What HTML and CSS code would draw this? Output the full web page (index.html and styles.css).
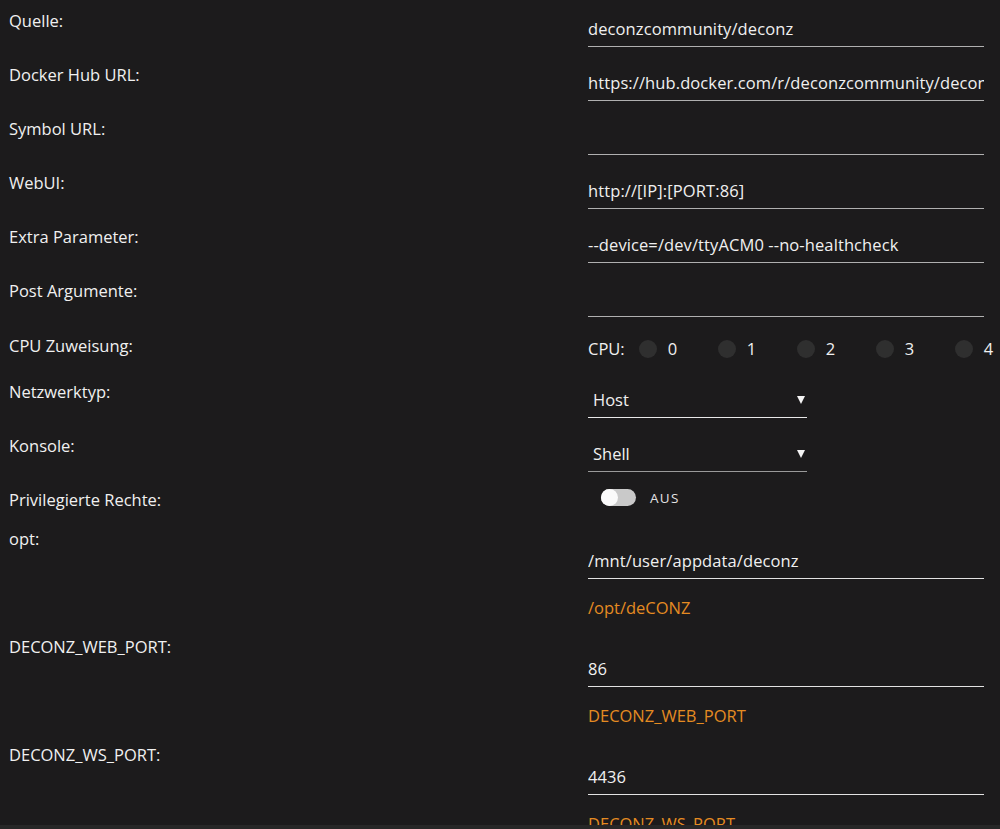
FILE: index.html
```
<!DOCTYPE html>
<html lang="de">
<head>
    <meta charset="UTF-8">
    <meta name="viewport" content="width=device-width, initial-scale=1.0">
    <title>deCONZ bearbeiten</title>
    <link rel="stylesheet" href="styles.css">
</head>
<body>
    <form class="template-form">
        <div class="row">
            <label class="row-label">Quelle:</label>
            <div class="row-value">
                <input type="text" class="line-input" value="deconzcommunity/deconz">
            </div>
        </div>
        <div class="row">
            <label class="row-label">Docker Hub URL:</label>
            <div class="row-value">
                <input type="text" class="line-input" value="https://hub.docker.com/r/deconzcommunity/deconz/">
            </div>
        </div>
        <div class="row">
            <label class="row-label">Symbol URL:</label>
            <div class="row-value">
                <input type="text" class="line-input" value="">
            </div>
        </div>
        <div class="row">
            <label class="row-label">WebUI:</label>
            <div class="row-value">
                <input type="text" class="line-input" value="http://[IP]:[PORT:86]">
            </div>
        </div>
        <div class="row">
            <label class="row-label">Extra Parameter:</label>
            <div class="row-value">
                <input type="text" class="line-input" value="--device=/dev/ttyACM0 --no-healthcheck">
            </div>
        </div>
        <div class="row">
            <label class="row-label">Post Argumente:</label>
            <div class="row-value">
                <input type="text" class="line-input" value="">
            </div>
        </div>

        <!-- CPU Zuweisung -->
        <div class="row row-cpu">
            <label class="row-label">CPU Zuweisung:</label>
            <div class="row-value cpu-list">
                <span class="cpu-title">CPU:</span>
                <label class="cpu-item"><span class="cpu-dot"></span>0</label>
                <label class="cpu-item"><span class="cpu-dot"></span>1</label>
                <label class="cpu-item"><span class="cpu-dot"></span>2</label>
                <label class="cpu-item"><span class="cpu-dot"></span>3</label>
                <label class="cpu-item"><span class="cpu-dot"></span>4</label>
            </div>
        </div>

        <div class="row">
            <label class="row-label">Netzwerktyp:</label>
            <div class="row-value">
                <div class="select-wrap bright">
                    <select class="line-select">
                        <option>Host</option>
                        <option>Bridge</option>
                    </select>
                </div>
            </div>
        </div>
        <div class="row">
            <label class="row-label">Konsole:</label>
            <div class="row-value">
                <div class="select-wrap dim">
                    <select class="line-select">
                        <option>Shell</option>
                        <option>Bash</option>
                    </select>
                </div>
            </div>
        </div>

        <!-- Privilegiert -->
        <div class="row row-switch">
            <label class="row-label">Privilegierte Rechte:</label>
            <div class="row-value switch-box">
                <span class="switch"><span class="knob"></span></span>
                <span class="switch-text">AUS</span>
            </div>
        </div>

        <!-- Pfade und Variablen -->
        <div class="row row-config">
            <label class="row-label">opt:</label>
            <div class="row-value">
                <input type="text" class="line-input bright" value="/mnt/user/appdata/deconz">
                <div class="config-target">/opt/deCONZ</div>
            </div>
        </div>
        <div class="row row-config">
            <label class="row-label">DECONZ_WEB_PORT:</label>
            <div class="row-value">
                <input type="text" class="line-input bright" value="86">
                <div class="config-target">DECONZ_WEB_PORT</div>
            </div>
        </div>
        <div class="row row-config">
            <label class="row-label">DECONZ_WS_PORT:</label>
            <div class="row-value">
                <input type="text" class="line-input bright" value="4436">
                <div class="config-target">DECONZ_WS_PORT</div>
            </div>
        </div>
    </form>

    <div class="footer-bar"></div>
</body>
</html>
```

FILE: styles.css
```
:root {
    --bg-color: #1c1b1c;
    --text-color: #f0f0f0;
    --line-color: #b0b0b0;
    --orange: #e58b22;
}

body {
    margin: 0;
    background: var(--bg-color);
    color: var(--text-color);
    font-family: 'Open Sans', 'Noto Sans', sans-serif;
    font-size: 16.5px;
    overflow: hidden;
}

.row {
    display: grid;
    grid-template-columns: 579px 396px;
    align-items: start;
    padding: 10px 0 7px 9px;
}

.row-label {
    line-height: 21px;
}

/* Eingabefelder */
.line-input {
    display: block;
    box-sizing: border-box;
    width: 100%;
    height: 37px;
    margin: 0;
    padding: 0;
    border: none;
    border-bottom: 1px solid var(--line-color);
    background: transparent;
    color: var(--text-color);
    font-family: inherit;
    font-size: 16.5px;
    letter-spacing: 0.1px;
    outline: none;
}

.line-input.bright {
    border-bottom-color: #e2e2e2;
}

/* CPU */
.row-cpu {
    padding: 11px 0 12px 9px;
}

.cpu-list {
    display: flex;
    align-items: center;
    height: 21px;
    margin-top: 3px;
    line-height: 21px;
}

.cpu-title {
    margin-right: 14px;
}

.cpu-item {
    display: flex;
    align-items: center;
    width: 79px;
    flex-shrink: 0;
}

.cpu-dot {
    width: 18px;
    height: 18px;
    margin-right: 11px;
    border-radius: 50%;
    background: #2f2f2f;
}

/* Auswahl */
.select-wrap {
    position: relative;
    width: 219px;
    border-bottom: 1px solid #e8e8e8;
}

.select-wrap.dim {
    border-bottom-color: #9a9a9a;
}

.select-wrap:after {
    content: "";
    position: absolute;
    right: 2px;
    top: 15px;
    border-left: 4px solid transparent;
    border-right: 4px solid transparent;
    border-top: 8px solid #f4f4f4;
    pointer-events: none;
}

.line-select {
    display: block;
    width: 100%;
    height: 36px;
    padding: 0 0 0 5px;
    border: none;
    background: transparent;
    color: var(--text-color);
    font-family: inherit;
    font-size: 16.5px;
    appearance: none;
    -webkit-appearance: none;
    outline: none;
}

/* Schalter */
.row-switch {
    padding: 10px 0 8px 9px;
}

.switch-box {
    display: flex;
    align-items: center;
    height: 21px;
    margin-top: -2px;
}

.switch {
    position: relative;
    width: 35px;
    height: 17px;
    margin-left: 13px;
    border-radius: 9px;
    background: #c9c9c9;
}

.knob {
    position: absolute;
    left: 0;
    top: 0;
    width: 17px;
    height: 17px;
    border-radius: 50%;
    background: #fafafa;
}

.switch-text {
    margin-left: 14px;
    font-size: 13.5px;
    letter-spacing: 1.3px;
    color: #e4e4e4;
}

/* Pfade */
.row-config {
    padding: 10px 0 8px 9px;
}

.row-config .line-input {
    margin-top: 14px;
}

.config-target {
    margin-top: 18px;
    line-height: 21px;
    color: var(--orange);
}

.footer-bar {
    position: fixed;
    left: 0;
    right: 0;
    bottom: 0;
    height: 4px;
    background: #272727;
}
```
